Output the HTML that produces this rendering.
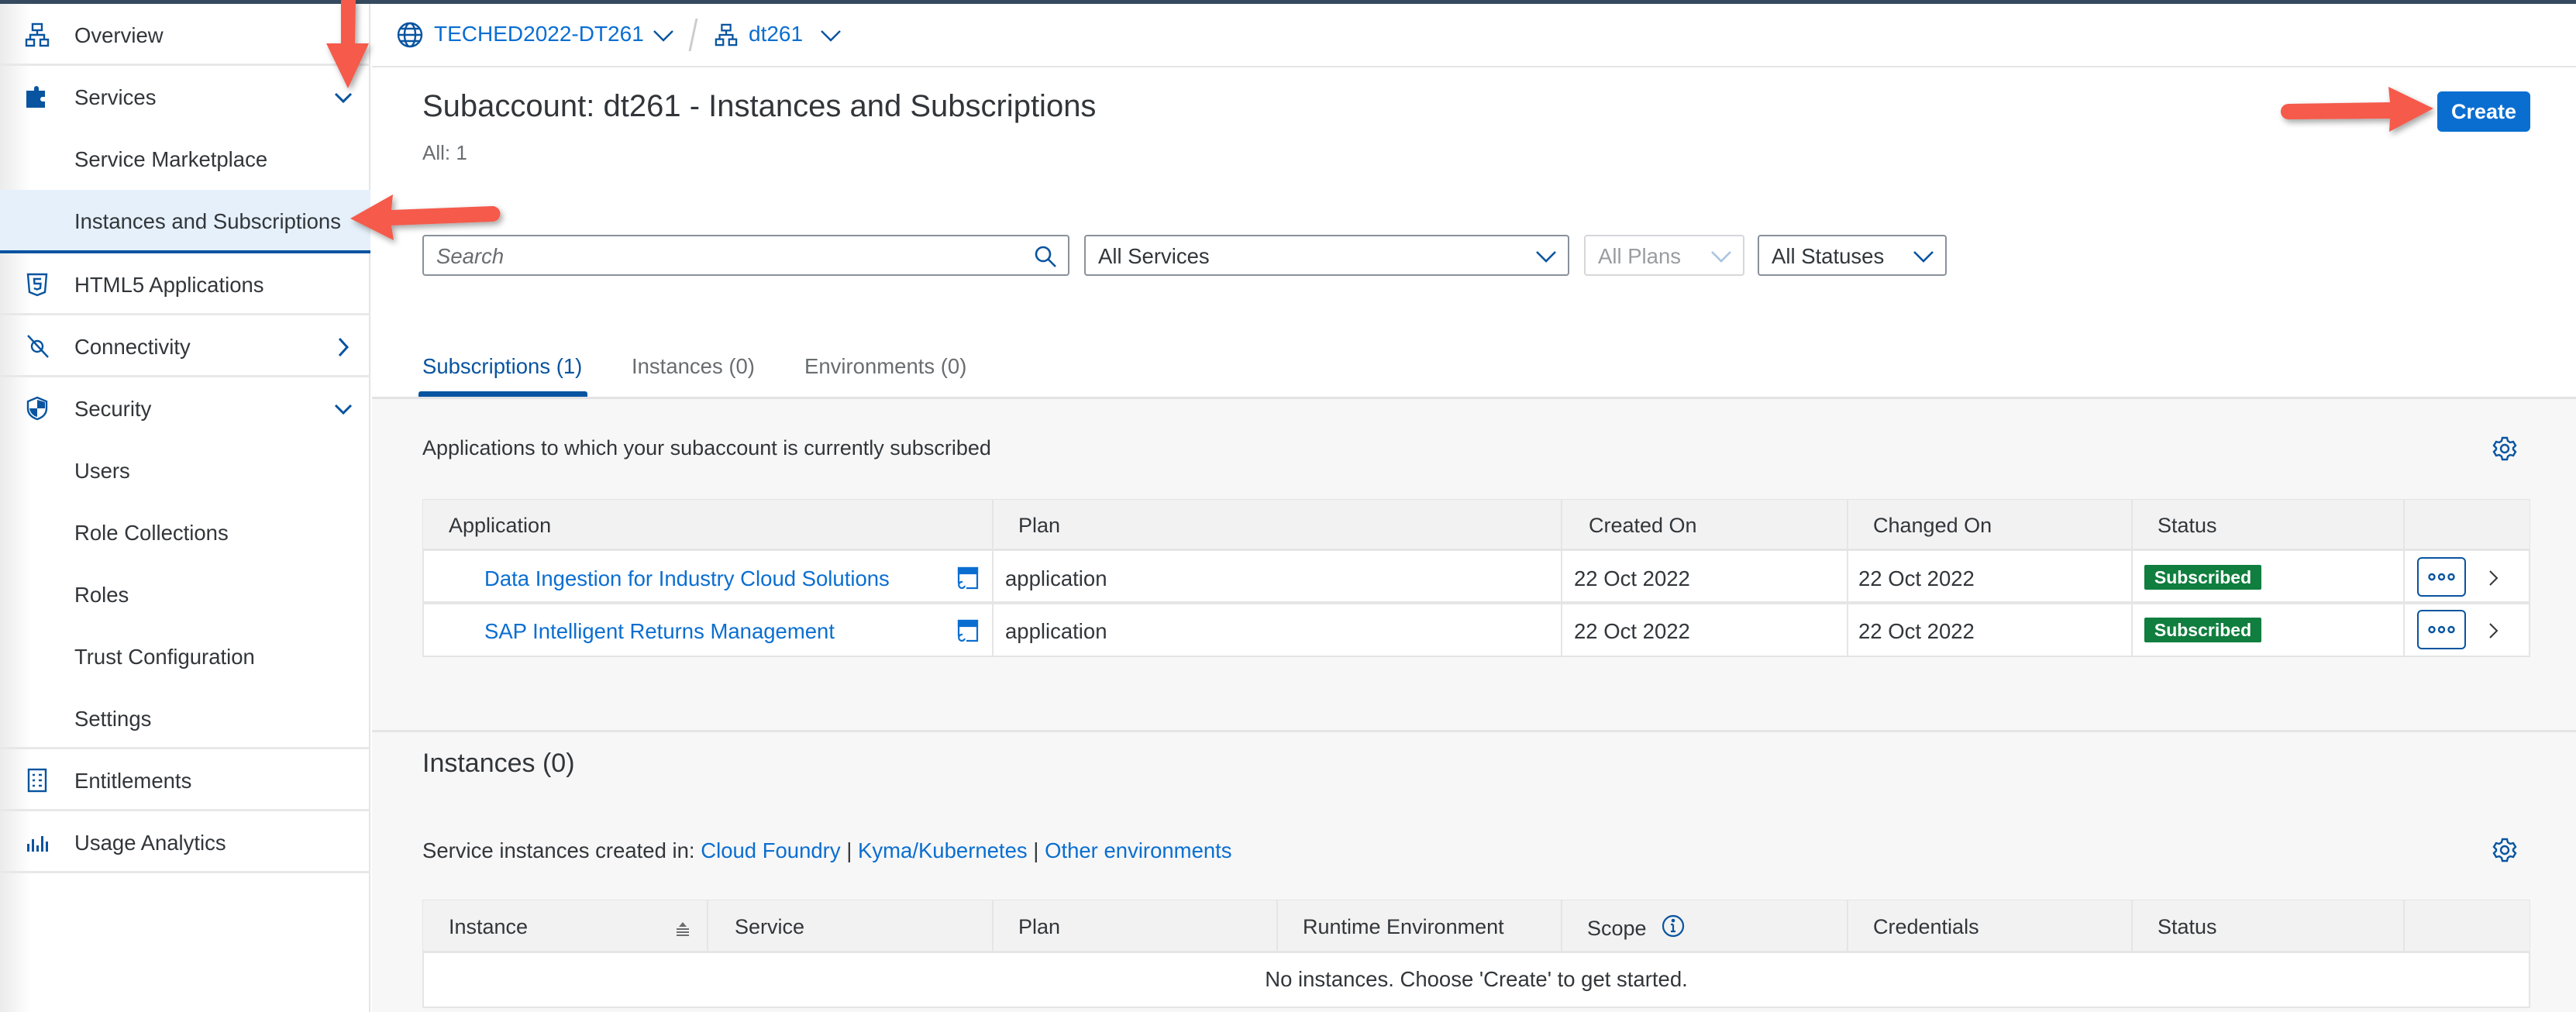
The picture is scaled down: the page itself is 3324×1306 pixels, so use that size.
<!DOCTYPE html>
<html><head><meta charset="utf-8"><style>
*{margin:0;padding:0;box-sizing:border-box}
body{width:3324px;height:1306px;overflow:hidden;position:relative;background:#fff;font-family:"Liberation Sans",Arial,sans-serif;color:#32363a}
.a{position:absolute;white-space:nowrap}
.side{position:absolute;left:0;top:5px;width:478px;height:1301px;background:linear-gradient(90deg,#ebebeb 0,#fff 40px);border-right:2px solid #e4e4e4}
.row{position:absolute;left:0;width:478px;height:80px;font-size:27.5px;line-height:82px;padding-left:96px}
.div{border-bottom:3px solid #e8e8e8}
.ic{position:absolute;left:32px;top:24px;width:32px;height:32px}
.chev{position:absolute;left:428px;top:26px}
.blue{color:#0a6ed1}
.sel{position:absolute;height:53px;border:2px solid #89919a;border-radius:4px;background:#fff;font-size:27.5px;line-height:51px;padding-left:16px}
.th{position:absolute;font-size:27px;color:#32363a;top:663px}
.td{position:absolute;font-size:27.5px}
.vl{position:absolute;width:2px;background:#e5e5e5}
.dots{position:absolute;left:3119px;width:63px;height:51px;border:2px solid #0854a0;border-radius:6px}
</style></head><body>
<div class="a" style="left:0;top:0;width:3324px;height:5px;background:#354a5f"></div>

<div class="side">
 <div class="row div" style="top:0">Overview
  <svg class="ic" viewBox="0 0 32 32" fill="none" stroke="#0854a0" stroke-width="2.4"><rect x="10" y="2" width="12" height="8"/><rect x="2" y="22" width="10" height="8"/><rect x="20" y="22" width="10" height="8"/><path d="M16 10v6M7 22v-6h18v6"/></svg></div>
 <div class="row" style="top:80px">Services
  <svg class="ic" viewBox="0 0 32 32"><path d="M2 8h10v-3a3 3 0 0 1 6 0v3h8v8h-3a3 3 0 0 0 0 6h3v8H2z" fill="#0854a0"/></svg>
  <svg class="chev" width="30" height="30" viewBox="0 0 30 30"><path d="M5 10l10 10 10-10" stroke="#0854a0" stroke-width="3" fill="none"/></svg></div>
 <div class="row" style="top:160px">Service Marketplace</div>
 <div class="row" style="top:240px;background:#e5f0fa;border-bottom:4px solid #0854a0;height:82px">Instances and Subscriptions</div>
 <div class="row div" style="top:322px">HTML5 Applications
  <svg class="ic" viewBox="0 0 32 32" fill="none" stroke="#0854a0" stroke-width="2.4"><path d="M4 3h24l-2 23-10 4-10-4z"/><path d="M21 9h-9l.5 6h8l-.6 6-4 1.5-4-1.5" /></svg></div>
 <div class="row div" style="top:402px">Connectivity
  <svg class="ic" viewBox="0 0 32 32" fill="none" stroke="#0854a0" stroke-width="2.4"><path d="M4 2l26 28"/><circle cx="16" cy="16" r="7"/></svg>
  <svg class="chev" width="30" height="30" viewBox="0 0 30 30"><path d="M10 4l10 11-10 11" stroke="#0854a0" stroke-width="3" fill="none"/></svg></div>
 <div class="row" style="top:482px">Security
  <svg class="ic" viewBox="0 0 32 32"><path d="M16 2l12 5v9c0 8-6 12-12 14C10 28 4 24 4 16V7z" fill="none" stroke="#0854a0" stroke-width="2.4"/><path d="M16 5v11h10v-8zM16 16H6c1 6 5 10 10 11z" fill="#0854a0"/></svg>
  <svg class="chev" width="30" height="30" viewBox="0 0 30 30"><path d="M5 10l10 10 10-10" stroke="#0854a0" stroke-width="3" fill="none"/></svg></div>
 <div class="row" style="top:562px">Users</div>
 <div class="row" style="top:642px">Role Collections</div>
 <div class="row" style="top:722px">Roles</div>
 <div class="row" style="top:802px">Trust Configuration</div>
 <div class="row div" style="top:882px">Settings</div>
 <div class="row div" style="top:962px">Entitlements
  <svg class="ic" viewBox="0 0 32 32" fill="none" stroke="#0854a0" stroke-width="2.4"><rect x="5" y="2" width="22" height="28"/><path d="M10 9h3M18 9h4M10 16h3M18 16h4M10 23h3M18 23h4"/></svg></div>
 <div class="row div" style="top:1042px">Usage Analytics
  <svg class="ic" viewBox="0 0 32 32" fill="#0854a0"><rect x="3" y="18" width="3" height="10"/><rect x="9" y="12" width="3" height="16"/><rect x="15" y="20" width="3" height="8"/><rect x="21" y="8" width="3" height="20"/><rect x="27" y="15" width="3" height="13"/></svg></div>
</div>

<div class="a" style="left:480px;top:5px;width:2844px;height:82px;border-bottom:2px solid #e5e5e5"></div>
<svg class="a" style="left:512px;top:28px" width="34" height="34" viewBox="0 0 34 34" fill="none" stroke="#0854a0" stroke-width="2.4"><circle cx="17" cy="17" r="15"/><ellipse cx="17" cy="17" rx="7" ry="15"/><path d="M2 17h30M5 9h24M5 25h24"/></svg>
<div class="a blue" style="left:560px;top:28px;font-size:28px">TECHED2022-DT261</div>
<svg class="a" style="left:842px;top:36px" width="28" height="20" viewBox="0 0 28 20"><path d="M2 4l12 12 12-12" stroke="#0854a0" stroke-width="2.4" fill="none"/></svg>
<div class="a" style="left:893px;top:24px;width:3px;height:42px;background:#ccc;transform:skewX(-12deg)"></div>
<svg class="a" style="left:922px;top:30px" width="30" height="30" viewBox="0 0 32 32" fill="none" stroke="#0854a0" stroke-width="2.4"><rect x="10" y="2" width="12" height="8"/><rect x="2" y="22" width="10" height="8"/><rect x="20" y="22" width="10" height="8"/><path d="M16 10v6M7 22v-6h18v6"/></svg>
<div class="a blue" style="left:966px;top:28px;font-size:28px">dt261</div>
<svg class="a" style="left:1058px;top:36px" width="28" height="20" viewBox="0 0 28 20"><path d="M2 4l12 12 12-12" stroke="#0854a0" stroke-width="2.4" fill="none"/></svg>

<div class="a" style="left:545px;top:115px;font-size:40px;color:#32363a">Subaccount: dt261 - Instances and Subscriptions</div>
<div class="a" style="left:545px;top:182px;font-size:26px;color:#6a6d70">All: 1</div>
<div class="a" style="left:3145px;top:118px;width:120px;height:52px;background:#0a6ed1;border-radius:6px;color:#fff;font-weight:bold;font-size:27px;line-height:52px;text-align:center">Create</div>

<div class="sel" style="left:545px;top:303px;width:835px;font-style:italic;color:#6a6d70">Search
 <svg class="a" style="right:14px;top:11px" width="30" height="30" viewBox="0 0 30 30" fill="none" stroke="#0854a0" stroke-width="2.6"><circle cx="12" cy="12" r="9"/><path d="M19 19l9 9"/></svg></div>
<div class="sel" style="left:1399px;top:303px;width:626px">All Services
 <svg class="a" style="right:14px;top:16px" width="28" height="20" viewBox="0 0 28 20"><path d="M2 4l12 12 12-12" stroke="#0854a0" stroke-width="2.6" fill="none"/></svg></div>
<div class="sel" style="left:2044px;top:303px;width:207px;border-color:#d5d7d9;color:#9a9da0">All Plans
 <svg class="a" style="right:14px;top:16px" width="28" height="20" viewBox="0 0 28 20"><path d="M2 4l12 12 12-12" stroke="#a8c4e0" stroke-width="2.6" fill="none"/></svg></div>
<div class="sel" style="left:2268px;top:303px;width:244px">All Statuses
 <svg class="a" style="right:14px;top:16px" width="28" height="20" viewBox="0 0 28 20"><path d="M2 4l12 12 12-12" stroke="#0854a0" stroke-width="2.6" fill="none"/></svg></div>

<div class="a" style="left:545px;top:457px;font-size:27.5px;color:#0854a0">Subscriptions (1)</div>
<div class="a" style="left:815px;top:457px;font-size:27.5px;color:#6a6d70">Instances (0)</div>
<div class="a" style="left:1038px;top:457px;font-size:27.5px;color:#6a6d70">Environments (0)</div>
<div class="a" style="left:540px;top:505px;width:218px;height:7px;background:#0854a0;border-radius:3px 3px 0 0"></div>

<div class="a" style="left:480px;top:512px;width:2844px;height:794px;background:#f7f7f7;border-top:3px solid #e2e2e2"></div>
<div class="a" style="left:545px;top:563px;font-size:27px">Applications to which your subaccount is currently subscribed</div>
<svg class="a" style="left:3215px;top:562px" width="34" height="34" viewBox="0 0 34 34" fill="none" stroke="#0854a0" stroke-width="2.4"><circle cx="17" cy="17" r="5"/><path d="M14 3h6l1 4 3 2 4-1 3 5-3 3v2l3 3-3 5-4-1-3 2-1 4h-6l-1-4-3-2-4 1-3-5 3-3v-2L3 13l3-5 4 1 3-2z"/></svg>

<div class="a" style="left:545px;top:644px;width:2720px;height:204px;background:#fff;border:2px solid #e5e5e5"></div>
<div class="a" style="left:546px;top:645px;width:2718px;height:66px;background:#f2f2f2;border-bottom:3px solid #e5e5e5"></div>
<div class="a" style="left:546px;top:776px;width:2718px;height:4px;background:#e5e5e5"></div>
<div class="vl" style="left:1280px;top:645px;height:202px"></div>
<div class="vl" style="left:2014px;top:645px;height:202px"></div>
<div class="vl" style="left:2383px;top:645px;height:202px"></div>
<div class="vl" style="left:2750px;top:645px;height:202px"></div>
<div class="vl" style="left:3101px;top:645px;height:202px"></div>
<div class="th" style="left:579px">Application</div>
<div class="th" style="left:1314px">Plan</div>
<div class="th" style="left:2050px">Created On</div>
<div class="th" style="left:2417px">Changed On</div>
<div class="th" style="left:2784px">Status</div>

<div class="td blue" style="left:625px;top:731px">Data Ingestion for Industry Cloud Solutions</div>
<div class="td blue" style="left:625px;top:799px">SAP Intelligent Returns Management</div>
<svg class="a" style="left:1234px;top:731px" width="30" height="30" viewBox="0 0 30 30" fill="none" stroke="#0a6ed1" stroke-width="2.2"><path d="M13 28H27V2H3v20"/><rect x="3" y="2" width="24" height="7" fill="#0a6ed1"/><path d="M8 20a4 4 0 1 0 3 5"/></svg>
<svg class="a" style="left:1234px;top:799px" width="30" height="30" viewBox="0 0 30 30" fill="none" stroke="#0a6ed1" stroke-width="2.2"><path d="M13 28H27V2H3v20"/><rect x="3" y="2" width="24" height="7" fill="#0a6ed1"/><path d="M8 20a4 4 0 1 0 3 5"/></svg>
<div class="td" style="left:1297px;top:731px">application</div>
<div class="td" style="left:1297px;top:799px">application</div>
<div class="td" style="left:2031px;top:731px">22 Oct 2022</div>
<div class="td" style="left:2031px;top:799px">22 Oct 2022</div>
<div class="td" style="left:2398px;top:731px">22 Oct 2022</div>
<div class="td" style="left:2398px;top:799px">22 Oct 2022</div>
<div class="a" style="left:2767px;top:729px;width:151px;height:32px;background:#107e3e;color:#fff;font-weight:bold;font-size:23px;line-height:32px;text-align:center;border-radius:2px">Subscribed</div>
<div class="a" style="left:2767px;top:797px;width:151px;height:32px;background:#107e3e;color:#fff;font-weight:bold;font-size:23px;line-height:32px;text-align:center;border-radius:2px">Subscribed</div>
<div class="dots" style="top:719px"><svg width="59" height="47" viewBox="0 0 59 47" fill="none" stroke="#0854a0" stroke-width="2.4"><circle cx="17" cy="23.5" r="3.5"/><circle cx="29.5" cy="23.5" r="3.5"/><circle cx="42" cy="23.5" r="3.5"/></svg></div>
<div class="dots" style="top:787px"><svg width="59" height="47" viewBox="0 0 59 47" fill="none" stroke="#0854a0" stroke-width="2.4"><circle cx="17" cy="23.5" r="3.5"/><circle cx="29.5" cy="23.5" r="3.5"/><circle cx="42" cy="23.5" r="3.5"/></svg></div>
<svg class="a" style="left:3208px;top:734px" width="20" height="24" viewBox="0 0 20 24"><path d="M5 3l9 9-9 9" stroke="#32363a" stroke-width="2" fill="none"/></svg>
<svg class="a" style="left:3208px;top:802px" width="20" height="24" viewBox="0 0 20 24"><path d="M5 3l9 9-9 9" stroke="#32363a" stroke-width="2" fill="none"/></svg>

<div class="a" style="left:480px;top:942px;width:2844px;height:3px;background:#e5e5e5"></div>
<div class="a" style="left:545px;top:966px;font-size:34px">Instances (0)</div>
<div class="a" style="left:545px;top:1082px;font-size:27.5px">Service instances created in: <span class="blue">Cloud Foundry</span> | <span class="blue">Kyma/Kubernetes</span> | <span class="blue">Other environments</span></div>
<svg class="a" style="left:3215px;top:1080px" width="34" height="34" viewBox="0 0 34 34" fill="none" stroke="#0854a0" stroke-width="2.4"><circle cx="17" cy="17" r="5"/><path d="M14 3h6l1 4 3 2 4-1 3 5-3 3v2l3 3-3 5-4-1-3 2-1 4h-6l-1-4-3-2-4 1-3-5 3-3v-2L3 13l3-5 4 1 3-2z"/></svg>

<div class="a" style="left:545px;top:1161px;width:2720px;height:140px;background:#fff;border:2px solid #e5e5e5"></div>
<div class="a" style="left:546px;top:1162px;width:2718px;height:68px;background:#f2f2f2;border-bottom:3px solid #e5e5e5"></div>
<div class="vl" style="left:912px;top:1162px;height:68px"></div>
<div class="vl" style="left:1280px;top:1162px;height:68px"></div>
<div class="vl" style="left:1647px;top:1162px;height:68px"></div>
<div class="vl" style="left:2014px;top:1162px;height:68px"></div>
<div class="vl" style="left:2383px;top:1162px;height:68px"></div>
<div class="vl" style="left:2750px;top:1162px;height:68px"></div>
<div class="vl" style="left:3101px;top:1162px;height:68px"></div>
<div class="th" style="left:579px;top:1181px">Instance</div>
<svg class="a" style="left:870px;top:1188px" width="22" height="20" viewBox="0 0 22 20" fill="#6a6d70"><path d="M11 2l5 6H6z"/><rect x="3" y="10" width="16" height="2"/><rect x="3" y="14" width="16" height="2"/><rect x="3" y="18" width="16" height="2"/></svg>
<div class="th" style="left:948px;top:1181px">Service</div>
<div class="th" style="left:1314px;top:1181px">Plan</div>
<div class="th" style="left:1681px;top:1181px">Runtime Environment</div>
<div class="th" style="left:2048px;top:1183px">Scope</div>
<svg class="a" style="left:2143px;top:1179px" width="32" height="32" viewBox="0 0 32 32" fill="none" stroke="#0854a0" stroke-width="2.2"><circle cx="16" cy="16" r="13"/><path d="M16 14v9M13 23h6M13 14h3"/><circle cx="16" cy="9" r="1.2" fill="#0854a0"/></svg>
<div class="th" style="left:2417px;top:1181px">Credentials</div>
<div class="th" style="left:2784px;top:1181px">Status</div>
<div class="td" style="left:546px;width:2718px;text-align:center;top:1248px">No instances. Choose 'Create' to get started.</div>

<svg class="a" style="left:0;top:0;overflow:visible" width="3324" height="1306">
<defs><filter id="sh" x="-20%" y="-20%" width="140%" height="140%"><feDropShadow dx="3" dy="4" stdDeviation="4" flood-color="#000" flood-opacity="0.35"/></filter></defs>
<g fill="#f55a4b" filter="url(#sh)">
<path d="M440 0h19l-1 56h18l-27 58-28-58h19z"/>
<path d="M452 282l55-31-2 20 130-5a10 10 0 0 1 1 20l-131 5 3 19z"/>
<path d="M3140 140l-58-28 2 20-131 2a10 10 0 0 0 0 20l131-1-1 17z"/>
</g></svg>
</body></html>
